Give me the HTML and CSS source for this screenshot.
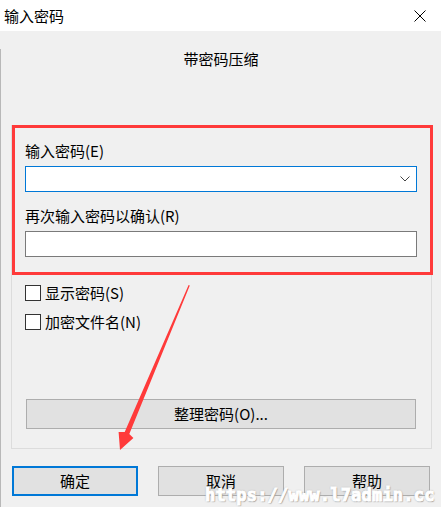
FILE: index.html
```html
<!DOCTYPE html>
<html lang="zh-CN">
<head>
  <meta charset="UTF-8" />
  <title>输入密码</title>
  <link rel="stylesheet" href="styles.css">
</head>
<body>
  <div class="titlebar">
    <span class="title">输入密码</span>
    <svg class="close" width="12" height="12" viewBox="0 0 12 12">
      <path d="M0.5 0.5 L11.5 11.5 M11.5 0.5 L0.5 11.5" stroke="#000" stroke-width="1" fill="none" />
    </svg>
  </div>

  <div class="content">
    <div class="caption">带密码压缩</div>

    <div class="group">
      <div class="highlight"></div>

      <label class="field-label">输入密码(E)</label>
      <div class="combo">
        <svg class="chevron" width="10" height="6" viewBox="0 0 10 6">
          <path d="M0.5 0.5 L5 5 L9.5 0.5" stroke="#444" stroke-width="1" fill="none" />
        </svg>
      </div>

      <label class="field-label second">再次输入密码以确认(R)</label>
      <div class="textbox"></div>

      <div class="check-row first">
        <span class="checkbox"></span>
        <span>显示密码(S)</span>
      </div>
      <div class="check-row">
        <span class="checkbox"></span>
        <span>加密文件名(N)</span>
      </div>

      <div class="button wide">整理密码(O)...</div>
    </div>

    <div class="actions">
      <div class="button default">确定</div>
      <div class="button">取消</div>
      <div class="button">帮助</div>
    </div>

    <svg class="arrow" width="441" height="507" viewBox="0 0 441 507">
      <polygon points="188.6,285 189.8,285.6 129.3,434 133.4,438.1 120,450 118.6,431.9 124.7,432" fill="#ff3a3a" />
    </svg>

    <div class="watermark">https://www.l7admin.cc</div>
  </div>
</body>
</html>
```

FILE: styles.css
```css
body {
  margin: 0;
  width: 441px;
  height: 507px;
  overflow: hidden;
  background: #f0f0f0;
  font-family: "Noto Sans CJK SC", "Noto Sans", sans-serif;
  font-size: 15px;
  color: #000;
  position: relative;
}

.titlebar {
  height: 31px;
  background: #fff;
  display: flex;
  align-items: center;
  justify-content: space-between;
  padding: 0 15px 0 4px;
}

.title {
  line-height: 20px;
}

.close {
  display: block;
}

.content {
  height: 476px;
  border-left: 1px solid #b8b8b8;
  box-sizing: border-box;
}

.caption {
  margin-top: 18px;
  height: 20px;
  line-height: 20px;
  text-align: center;
  margin-bottom: 56px;
}

.group {
  position: relative;
  margin-left: 10px;
  width: 421px;
  height: 324px;
  box-sizing: border-box;
  border: 1px solid #dcdcdc;
  padding: 15px 14px 19px 13px;
  display: flex;
  flex-direction: column;
}

/* red annotation frame drawn over the two password fields */
.highlight {
  position: absolute;
  top: -1px;
  left: 0;
  width: 421px;
  height: 150px;
  box-sizing: border-box;
  border: 3px solid #ff3a3a;
}

.field-label {
  display: block;
  line-height: 20px;
  height: 20px;
  margin-bottom: 5px;
}

.field-label.second {
  margin-top: 14px;
}

.combo,
.textbox {
  height: 26px;
  box-sizing: border-box;
  background: #fff;
  border: 1px solid #7a7a7a;
}

.combo {
  border-color: #0078d7;
  display: flex;
  align-items: center;
  justify-content: flex-end;
  padding-right: 6px;
}

.chevron {
  display: block;
}

.check-row {
  display: flex;
  align-items: center;
  gap: 4px;
  height: 29px;
  line-height: 20px;
}

.check-row.first {
  margin-top: 21px;
}

.checkbox {
  width: 16px;
  height: 16px;
  box-sizing: border-box;
  border: 1px solid #333;
  background: #fff;
}

.button {
  height: 30px;
  box-sizing: border-box;
  background: #e1e1e1;
  border: 1px solid #adadad;
  display: flex;
  align-items: center;
  justify-content: center;
  line-height: 20px;
}

.button.wide {
  margin: auto 1px 0;
}

.actions {
  display: flex;
  gap: 20px;
  margin: 17px 0 0 11px;
}

.actions .button {
  width: 126px;
}

.button.default {
  border: 2px solid #0078d7;
}

.arrow {
  position: absolute;
  top: 0;
  left: 0;
  pointer-events: none;
}

.watermark {
  position: absolute;
  left: 205px;
  top: 485px;
  font-family: "DejaVu Sans Mono", monospace;
  font-weight: bold;
  font-size: 17px;
  line-height: 20px;
  letter-spacing: 0.2px;
  color: #fff;
  -webkit-text-stroke: 1px #fff;
  text-shadow: 0 0 2px #8a8a8a, 1px 1px 1px #a0a0a0;
}
```
